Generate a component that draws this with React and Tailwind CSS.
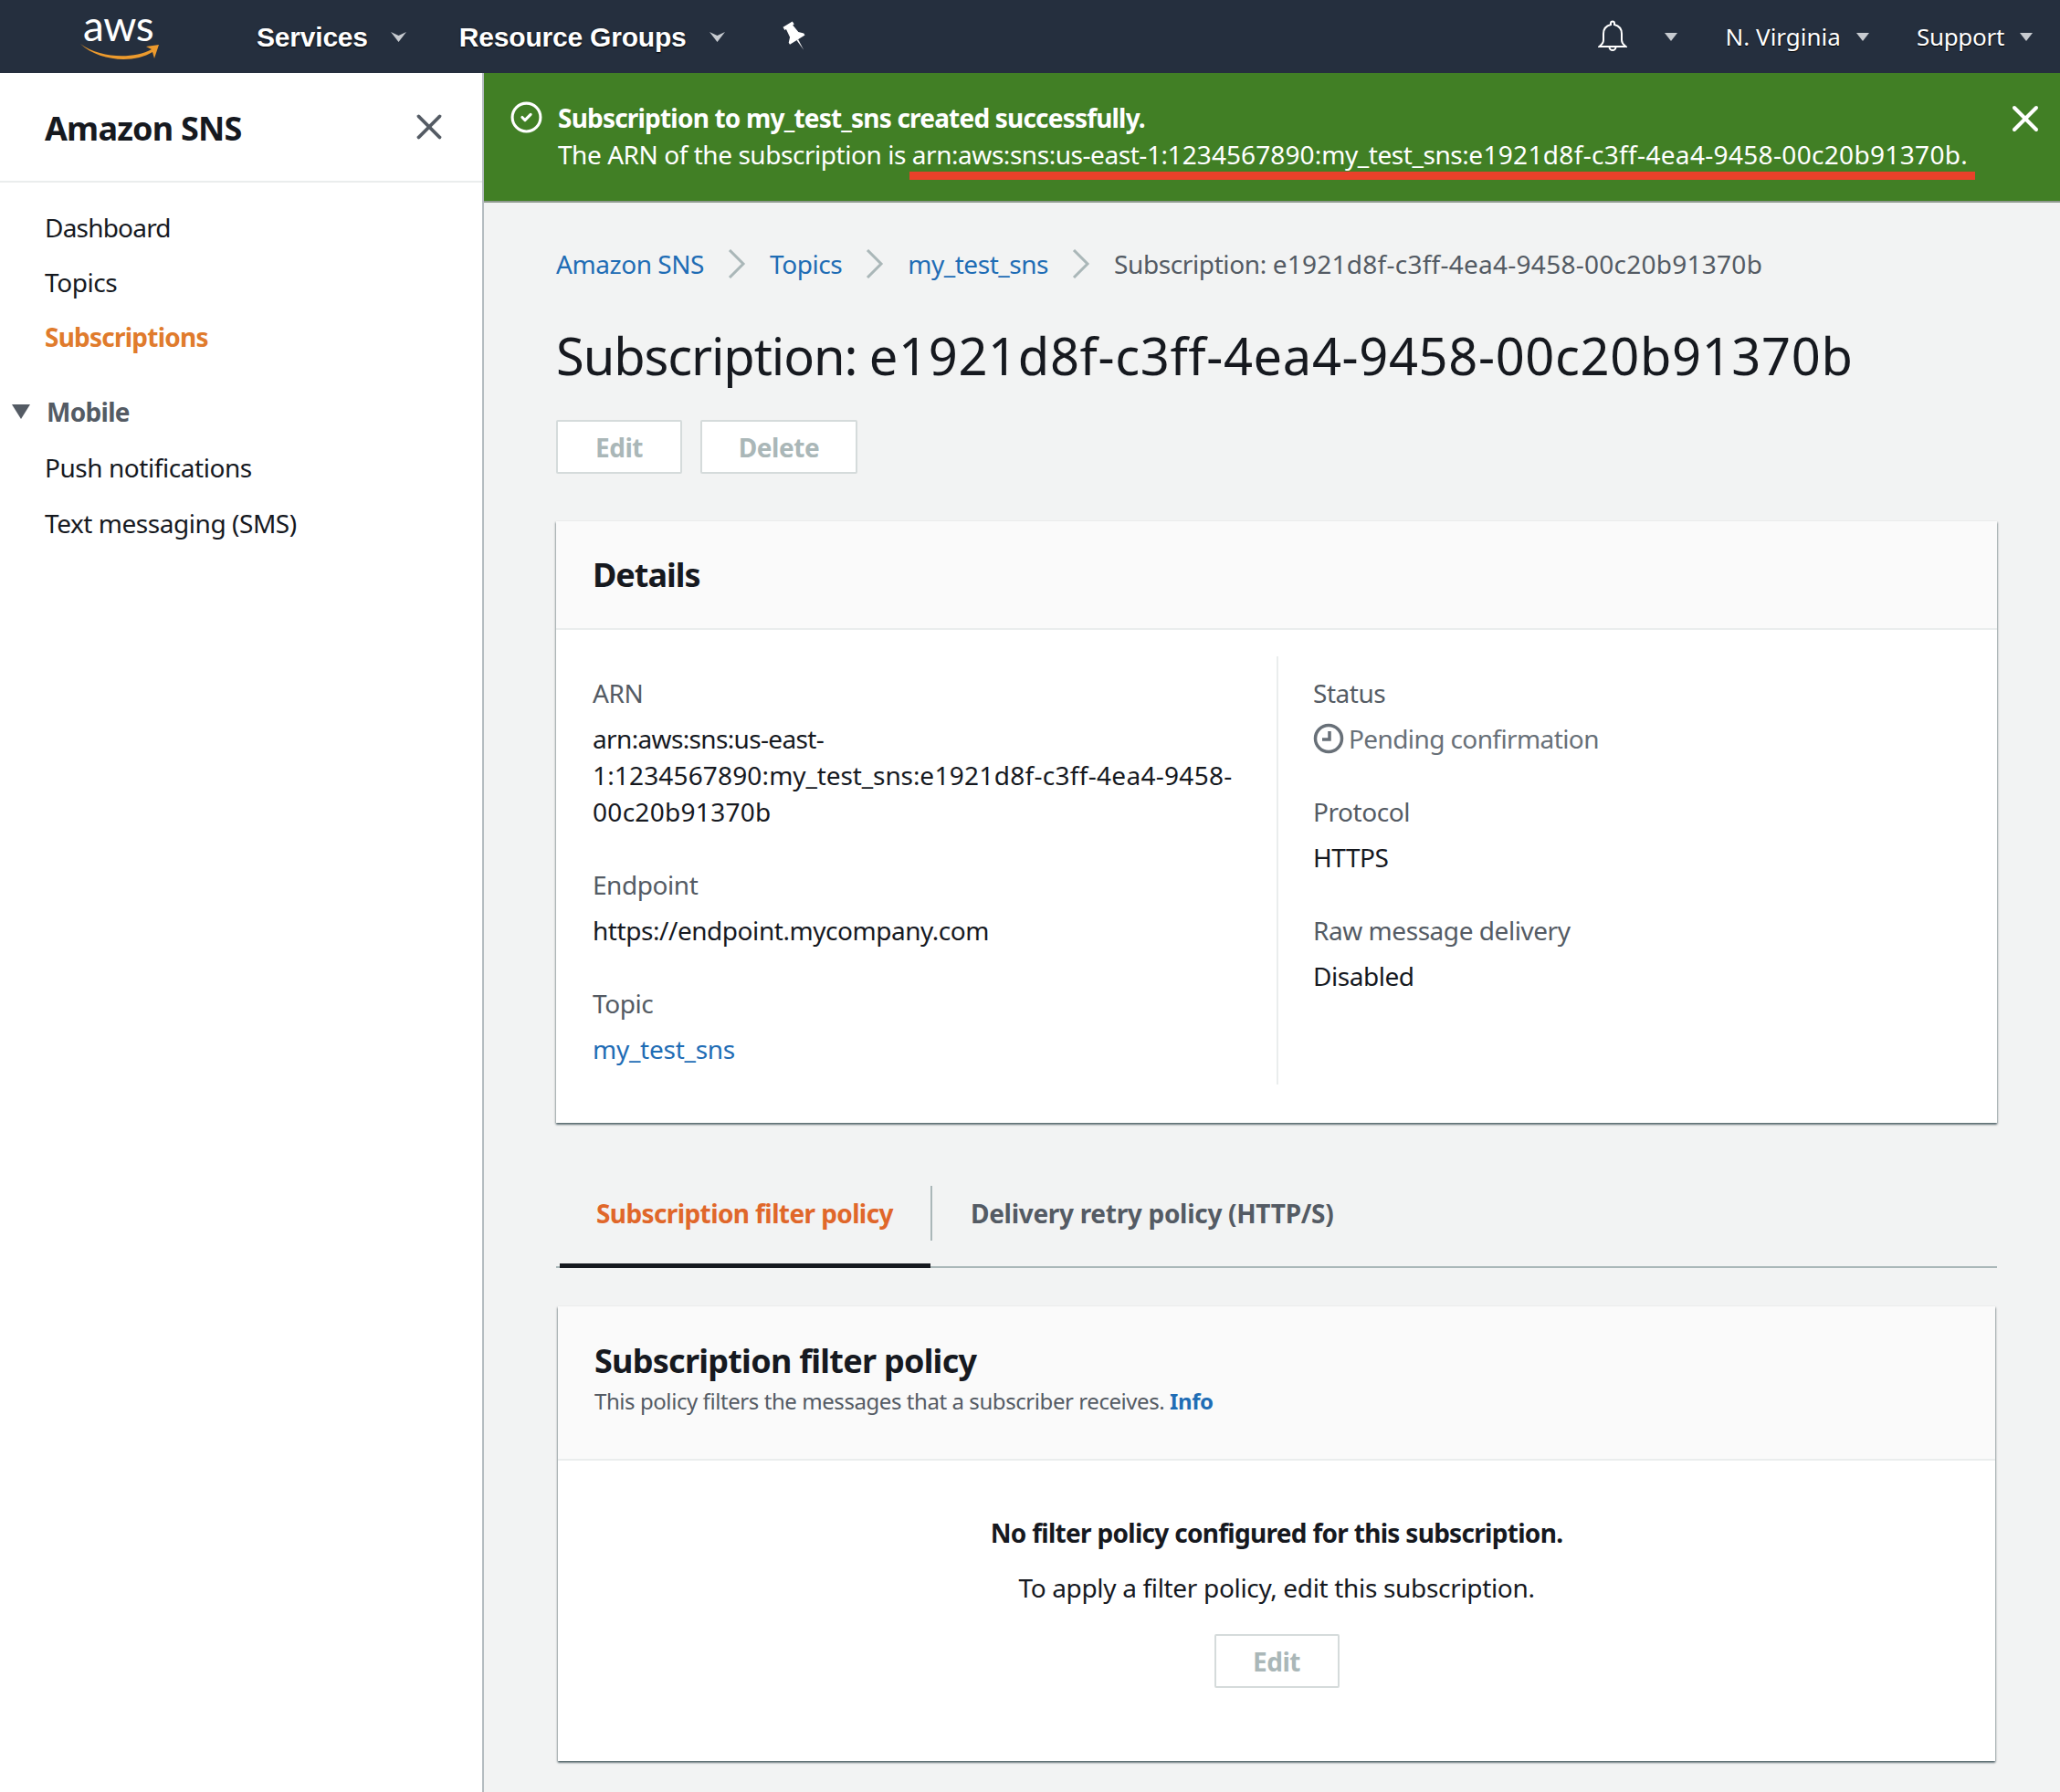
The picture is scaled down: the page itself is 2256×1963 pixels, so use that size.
import { CircleCheck, X } from "lucide-react";

const Caret = ({ className = "" }) => (
  <svg width="17" height="11" viewBox="0 0 17 11" className={className}>
    <path d="M0 0 L8.5 4 L17 0 L8.5 11 Z" fill="#c7cbd0" />
  </svg>
);

const SmallCaret = ({ className = "" }) => (
  <svg width="14" height="9" viewBox="0 0 14 9" className={className}>
    <path d="M0 0 H14 L7 9 Z" fill="#c7cbd0" />
  </svg>
);

const Field = ({ label, children, className = "" }) => (
  <div className={className}>
    <div className="text-[#545b64] h-[40px] leading-[40px]">{label}</div>
    <div className="mt-[10px] leading-[40px] text-[#16191f]">{children}</div>
  </div>
);

const Crumb = ({ children }) => (
  <>
    <a className="text-[#1f6db5]">{children}</a>
    <svg width="20" height="32" viewBox="0 0 20 32" className="mx-[26px]">
      <path d="M2 1 L17 16 L2 31" fill="none" stroke="#aab7b8" strokeWidth="3" />
    </svg>
  </>
);

const DisabledButton = ({ children, className = "" }) => (
  <button className={`h-[59px] bg-white border-2 border-[#d5dbdb] rounded-[2px] text-[#aab7b8] font-bold text-[28px] ${className}`}>
    {children}
  </button>
);

const NavItem = ({ children, className = "" }) => (
  <span className={`font-['Liberation_Sans',sans-serif] font-bold text-white text-[30px] tracking-[-0.2px] [text-shadow:0_1px_2px_#000] ${className}`}>
    {children}
  </span>
);

const cardShadow = "shadow-[0_2px_2px_0_rgba(0,28,36,0.5),1px_1px_2px_0_rgba(0,28,36,0.2),-1px_1px_2px_0_rgba(0,28,36,0.2)]";

export default function App() {
  return (
    <div className="w-[2256px] h-[1963px] overflow-hidden flex flex-col bg-[#f2f3f3] font-['Noto_Sans',sans-serif] text-[28px] tracking-[-0.45px] text-[#16191f]">
      {/* Top nav */}
      <header className="h-[80px] shrink-0 bg-[#252f3e] flex items-center relative">
        <div className="w-[281px] shrink-0 pl-[88px] flex flex-col items-start">
          <span className="font-['Lato',sans-serif] text-white text-[46px] leading-[30px] tracking-[-0.5px] ml-[3px]">aws</span>
          <svg width="86" height="22" viewBox="0 0 86 22" className="mt-[2px]">
            <path d="M0 3 C22 19 58 20 78 9 L72 6 L86 4 L81 19 L79 12 C58 25 20 22 0 3 Z" fill="#ec9a2d" />
          </svg>
        </div>
        <NavItem>Services</NavItem>
        <Caret className="ml-[25px]" />
        <NavItem className="ml-[58px]">Resource Groups</NavItem>
        <Caret className="ml-[25px]" />
        <svg width="30" height="34" viewBox="0 0 24 28" className="ml-[62px]">
          <g transform="rotate(-32 12 14)" fill="#fff">
            <path d="M7 1 H17 V4 H15.5 L16.5 12 L20 15.5 V17.5 H4 V15.5 L7.5 12 L8.5 4 H7 Z" />
            <path d="M11.2 17.5 H12.8 L12 28 Z" />
          </g>
        </svg>
        <div className="ml-auto flex items-center text-white text-[26px] tracking-normal pr-[30px]">
          <svg width="32" height="36" viewBox="0 0 32 36" fill="none" stroke="#fff" strokeWidth="2">
            <path d="M16 1.5 a2 2 0 0 1 2 2 v1.5 c5 1.2 8 5 8 10 v7 c0 3 2 5 4.5 7 H1.5 c2.5-2 4.5-4 4.5-7 v-7 c0-5 3-8.8 8-10 V3.5 a2 2 0 0 1 2-2 Z" />
            <path d="M12.5 29.5 a3.5 3.5 0 0 0 7 0" />
          </svg>
          <SmallCaret className="ml-[41px]" />
          <span className="ml-[53px] [text-shadow:0_1px_1px_#000]">N. Virginia</span>
          <SmallCaret className="ml-[17px]" />
          <span className="ml-[52px] tracking-[-0.3px] [text-shadow:0_1px_1px_#000]">Support</span>
          <SmallCaret className="ml-[17px]" />
        </div>
      </header>

      <div className="flex flex-1 min-h-0">
        {/* Sidebar */}
        <aside className="w-[530px] shrink-0 bg-white border-r-2 border-[#b4bcc0]">
          <div className="h-[120px] border-b-2 border-[#eaeded] pl-[49px] pr-[35px] flex items-center justify-between">
            <span className="text-[36px] font-bold tracking-[-0.8px] mt-[3px]">Amazon SNS</span>
            <X size={46} strokeWidth={2} className="text-[#545b64]" />
          </div>
          <nav className="pt-[19px]">
            <div className="h-[60px] leading-[60px] pl-[49px] tracking-[-0.8px]">Dashboard</div>
            <div className="h-[60px] leading-[60px] pl-[49px]">Topics</div>
            <div className="h-[60px] leading-[60px] pl-[49px] font-bold tracking-[-0.77px] text-[#e07b2c]">Subscriptions</div>
            <div className="h-[60px] flex items-center mt-[22px] pl-[13px] text-[#545b64] font-bold tracking-[-0.7px]">
              <svg width="20" height="16" viewBox="0 0 20 16"><path d="M0 0 H20 L10 16 Z" fill="#545b64" /></svg>
              <span className="ml-[18px]">Mobile</span>
            </div>
            <div className="h-[60px] leading-[60px] pl-[49px] mt-[1px]">Push notifications</div>
            <div className="h-[60px] leading-[60px] pl-[49px] mt-[1px]">Text messaging (SMS)</div>
          </nav>
        </aside>

        <main className="flex-1 min-w-0">
          {/* Flash banner */}
          <div className="h-[142px] bg-[#417f25] border-b-2 border-[#8f9a8f] relative flex text-white pl-[28px] pt-[29px]">
            <CircleCheck size={37} strokeWidth={2} className="mt-[1px] shrink-0" />
            <div className="ml-[16px] leading-[40px]">
              <div className="font-bold tracking-[-0.8px]">Subscription to my_test_sns created successfully.</div>
              <div>
                The ARN of the subscription is{" "}
                <span className="tracking-[-0.45px]">arn:aws:sns:us-east-1:</span>
                <span className="tracking-[0.1px]">1234567890:</span>
                <span className="tracking-[-0.45px]">my_test_sns:</span>
                <span className="tracking-[0.33px]">e1921d8f-c3ff-4ea4-9458-00c20b91370b.</span>
              </div>
            </div>
            <X size={48} strokeWidth={2} className="absolute right-[14px] top-[26px]" />
            <div className="absolute left-[466px] top-[108px] w-[1167px] h-[9px] bg-[#e8412a]" />
          </div>

          <div className="pl-[79px] pr-[69px]">
            {/* Breadcrumb */}
            <div className="mt-[47px] h-[40px] flex items-center">
              <Crumb>Amazon SNS</Crumb>
              <Crumb>Topics</Crumb>
              <Crumb>my_test_sns</Crumb>
              <span className="text-[#545b64] whitespace-pre">
                <span className="tracking-[-0.4px]">Subscription: </span>
                <span className="tracking-[0.26px]">e1921d8f-c3ff-4ea4-9458-00c20b91370b</span>
              </span>
            </div>

            <h1 className="mt-[45px] text-[56px] leading-[70px] whitespace-pre">
              <span className="tracking-[-1.1px]">Subscription: </span>
              <span className="tracking-[0.65px]">e1921d8f-c3ff-4ea4-9458-00c20b91370b</span>
            </h1>

            <div className="mt-[36px] flex gap-[20px]">
              <DisabledButton className="w-[138px]">Edit</DisabledButton>
              <DisabledButton className="w-[172px]">Delete</DisabledButton>
            </div>

            {/* Details card */}
            <section className={`mt-[52px] h-[659px] bg-white ${cardShadow}`}>
              <div className="h-[119px] bg-[#fafafa] border-b-2 border-[#eaeded] flex items-center pl-[40px]">
                <h2 className="text-[36px] font-bold tracking-[-1px]">Details</h2>
              </div>
              <div className="grid grid-cols-2 mt-[29px]">
                <div className="pl-[40px] pr-[40px] pt-[20px] h-[469px]">
                  <Field label="ARN">
                    <div className="w-[720px]">
                      <div className="tracking-[-0.65px]">arn:aws:sns:us-east-</div>
                      <div className="whitespace-nowrap">
                        <span className="tracking-[0.15px]">1:1234567890:</span>
                        <span className="tracking-[-0.1px]">my_test_sns:</span>
                        <span className="tracking-[0.3px]">e1921d8f-c3ff-4ea4-9458-</span>
                      </div>
                      <div className="tracking-[0.3px]">00c20b91370b</div>
                    </div>
                  </Field>
                  <Field label="Endpoint" className="mt-[40px]">https://endpoint.mycompany.com</Field>
                  <Field label="Topic" className="mt-[40px]"><a className="text-[#1f6db5] tracking-[-0.26px]">my_test_sns</a></Field>
                </div>
                <div className="pl-[38px] pt-[20px] h-[469px] border-l-2 border-[#eaeded]">
                  <Field label="Status">
                    <div className="flex items-center text-[#687078]">
                      <svg width="34" height="34" viewBox="0 0 34 34" className="mr-[5px] shrink-0">
                        <circle cx="17" cy="17" r="14.5" fill="none" stroke="#687078" strokeWidth="3.5" />
                        <path d="M18 9 V18 H10" fill="none" stroke="#687078" strokeWidth="3.5" />
                      </svg>
                      <span className="tracking-[-0.6px]">Pending confirmation</span>
                    </div>
                  </Field>
                  <Field label="Protocol" className="mt-[40px]">HTTPS</Field>
                  <Field label="Raw message delivery" className="mt-[40px]">Disabled</Field>
                </div>
              </div>
            </section>

            {/* Tabs */}
            <div className="mt-[69px] h-[90px] border-b-2 border-[#aab7b8] flex font-bold">
              <div className="ml-[4px] w-[406px] h-[90px] border-b-[5px] border-[#16191f] pl-[40px] pt-[10px] leading-[40px] tracking-[-0.6px] text-[#e0672a]">
                Subscription filter policy
              </div>
              <div className="w-[2px] h-[60px] bg-[#aab7b8]" />
              <div className="pl-[42px] pt-[10px] leading-[40px] tracking-[-0.3px] text-[#545b64]">Delivery retry policy (HTTP/S)</div>
            </div>

            {/* Filter policy card */}
            <section className={`mt-[42px] mx-[2px] h-[498px] bg-white ${cardShadow}`}>
              <div className="h-[169px] bg-[#fafafa] border-b-2 border-[#eaeded] pl-[40px] pt-[35px]">
                <h2 className="text-[36px] font-bold leading-[50px] tracking-[-0.75px]">Subscription filter policy</h2>
                <p className="text-[24px] leading-[36px] tracking-[-0.43px] text-[#545b64] mt-[1px]">
                  This policy filters the messages that a subscriber receives. <a className="text-[#1f6db5] font-bold">Info</a>
                </p>
              </div>
              <div className="flex flex-col items-center pt-[59px]">
                <div className="font-bold leading-[40px] tracking-[-0.7px]">No filter policy configured for this subscription.</div>
                <div className="mt-[20px] leading-[40px] tracking-[-0.33px]">To apply a filter policy, edit this subscription.</div>
                <DisabledButton className="w-[137px] mt-[31px]">Edit</DisabledButton>
              </div>
            </section>
          </div>
        </main>
      </div>
    </div>
  );
}
